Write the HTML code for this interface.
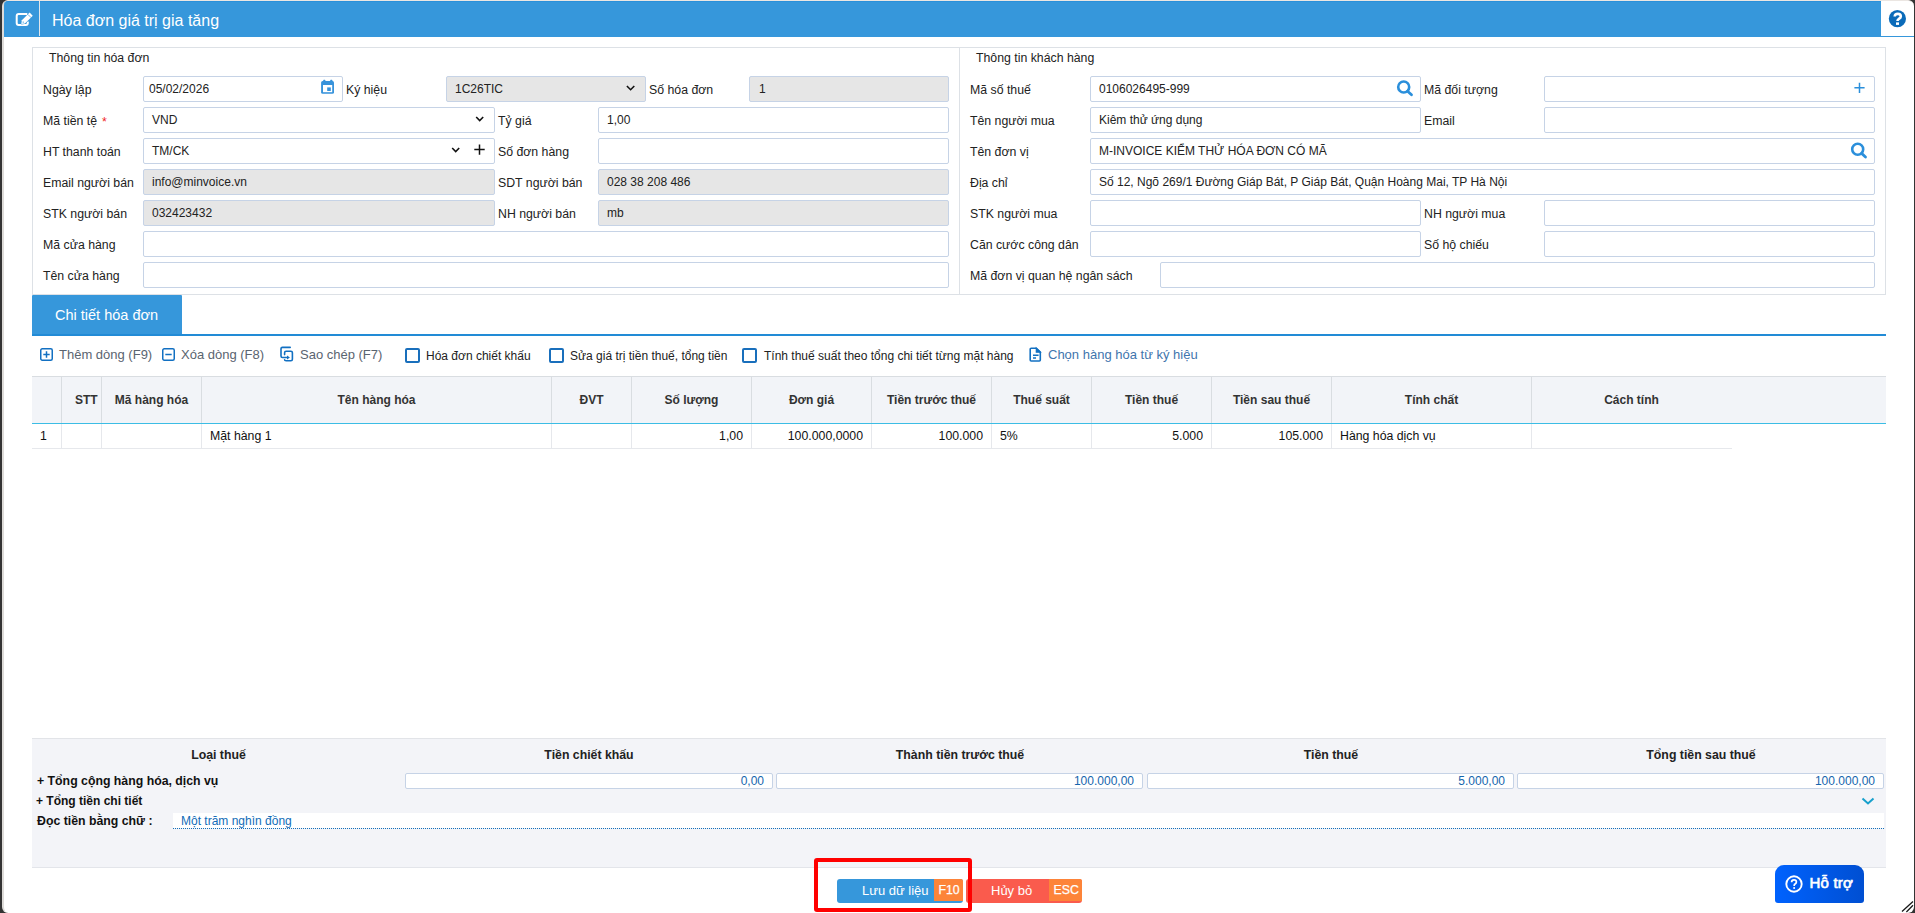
<!DOCTYPE html>
<html><head><meta charset="utf-8">
<style>
*{box-sizing:border-box;margin:0;padding:0}
html,body{width:1915px;height:913px;overflow:hidden;background:#333}
body{font-family:"Liberation Sans",sans-serif;font-size:12px;color:#222;position:relative}
.a{position:absolute}
#win{position:absolute;left:2px;top:0;width:1912px;height:913px;background:#fff;border-radius:6px;border-left:2px solid #dddbd8;border-top:1px solid #ebe6e2;overflow:hidden}
.lb{position:absolute;font-size:12.3px;color:#222;white-space:nowrap;line-height:14px}
.in{position:absolute;height:26px;border:1px solid #c6d3e6;border-radius:2px;background:#fff;font-size:12px;line-height:24px;padding-left:6px;white-space:nowrap;color:#222}
.dis{background:#e6e6e6}
.fs{position:absolute;border:1px solid #dde1e6}
.th{position:absolute;top:377px;height:46px;line-height:46px;text-align:center;font-weight:bold;font-size:12px;color:#333;border-left:1px solid #d9dde1}
.td{position:absolute;top:424px;height:24px;line-height:24px;font-size:12.3px;color:#111;border-left:1px solid #e6e8ec;padding:0 8px;white-space:nowrap}
.sh{position:absolute;top:747px;font-weight:bold;font-size:12.3px;color:#222;text-align:center;line-height:16px}
.sin{position:absolute;top:773px;height:16px;border:1px solid #c6d3e6;border-radius:2px;background:#fff;color:#1565ad;font-size:12px;line-height:14px;text-align:right;padding-right:8px}
.tb{top:347px;font-size:13px;color:#5a6470;line-height:15px;white-space:nowrap}
.tc{top:349px;font-size:12px;color:#222;line-height:15px;white-space:nowrap}
.cb{top:348px;width:15px;height:15px;border:2px solid #196fbc;border-radius:2px;background:#fff}
.sl{font-weight:bold;font-size:12.3px;color:#111;line-height:15px;white-space:nowrap}
.bt{top:882px;font-size:13px;color:#fff;line-height:17px;white-space:nowrap}
</style></head><body>
<div id="win"></div>

<!-- header -->
<div class="a" style="left:4px;top:1px;width:1877px;height:36px;background:#3697db;border-top:1px solid #2a90da;border-radius:4px 0 0 0"></div>
<div class="a" style="left:39px;top:1px;width:1px;height:35px;background:#dfe6ec"></div>
<svg class="a" style="left:12px;top:9px" width="24" height="20" viewBox="0 0 24 20">
 <path d="M15.3 5H6.7a2 2 0 0 0-2 2V13.9a2 2 0 0 0 2 2H13.8a2 2 0 0 0 2-2V12.5" fill="none" stroke="#fff" stroke-width="2"/>
 <path d="M9.3 15L9.84 11.34L17.64 3.54L20.76 6.66L12.96 14.46Z" fill="#fff" stroke="#3697db" stroke-width="1" paint-order="stroke"/>
 <path d="M15.9 5.4L19.1 8.6" stroke="#3697db" stroke-width="0.7"/>
 <circle cx="11.2" cy="13.1" r="0.7" fill="#3697db"/>
</svg>
<div class="a" style="left:52px;top:11px;font-size:16px;color:#fff;line-height:19px;white-space:nowrap">Hóa đơn giá trị gia tăng</div>
<div class="a" style="left:1881px;top:36px;width:33px;height:1px;background:#3697db"></div>
<svg class="a" style="left:1888px;top:10px" width="19" height="19" viewBox="0 0 19 19">
 <circle cx="9.4" cy="8.7" r="8.6" fill="#0b6bb9"/>
 <path d="M6.7 6.5C6.8 4.7 8.1 3.9 9.8 3.9C11.6 3.9 12.8 4.9 12.8 6.4C12.8 7.8 11.8 8.3 10.9 8.8C10 9.3 9.5 9.7 9.5 11" fill="none" stroke="#fff" stroke-width="2.6"/>
 <rect x="8" y="12.4" width="3" height="2.5" fill="#fff"/>
</svg>

<!-- fieldset 1 -->
<div class="fs" style="left:32px;top:47px;width:928px;height:248px;border-right:none"></div>
<div class="fs" style="left:959px;top:47px;width:927px;height:248px"></div>
<div class="lb" style="left:49px;top:51px">Thông tin hóa đơn</div>
<div class="lb" style="left:976px;top:51px">Thông tin khách hàng</div>

<div class="lb" style="left:43px;top:83px">Ngày lập</div>
<div class="in" style="left:143px;top:76px;width:200px;padding-left:5px">05/02/2026</div>
<svg class="a" style="left:320px;top:79px" width="16" height="16"><rect x="1.1" y="2" width="12.9" height="12.8" rx="1.6" fill="#3793db"/><rect x="3" y="6" width="9.2" height="7.2" fill="#fff"/><rect x="3.2" y="0.8" width="2.2" height="2.5" rx="0.6" fill="#3793db"/><rect x="10.2" y="0.8" width="2.2" height="2.5" rx="0.6" fill="#3793db"/><rect x="7.2" y="8.4" width="3.6" height="3.6" fill="#3793db"/></svg>
<div class="lb" style="left:346px;top:83px">Ký hiệu</div>
<div class="in dis" style="left:446px;top:76px;width:200px;padding-left:8px">1C26TIC</div>
<div class="lb" style="left:649px;top:83px">Số hóa đơn</div>
<div class="in dis" style="left:749px;top:76px;width:200px;padding-left:9px">1</div>

<div class="lb" style="left:43px;top:114px">Mã tiền tệ <span style="color:#f02525;position:relative;left:1.5px;top:0.5px">*</span></div>
<div class="in" style="left:143px;top:107px;width:352px;padding-left:8px">VND</div>
<div class="lb" style="left:498px;top:114px">Tỷ giá</div>
<div class="in" style="left:598px;top:107px;width:351px;padding-left:8px">1,00</div>

<div class="lb" style="left:43px;top:145px">HT thanh toán</div>
<div class="in" style="left:143px;top:138px;width:352px;padding-left:8px">TM/CK</div>
<div class="lb" style="left:498px;top:145px">Số đơn hàng</div>
<div class="in" style="left:598px;top:138px;width:351px"></div>

<div class="lb" style="left:43px;top:176px">Email người bán</div>
<div class="in dis" style="left:143px;top:169px;width:352px;padding-left:8px">info@minvoice.vn</div>
<div class="lb" style="left:498px;top:176px">SDT người bán</div>
<div class="in dis" style="left:598px;top:169px;width:351px;padding-left:8px">028 38 208 486</div>

<div class="lb" style="left:43px;top:207px">STK người bán</div>
<div class="in dis" style="left:143px;top:200px;width:352px;padding-left:8px">032423432</div>
<div class="lb" style="left:498px;top:207px">NH người bán</div>
<div class="in dis" style="left:598px;top:200px;width:351px;padding-left:8px">mb</div>

<div class="lb" style="left:43px;top:238px">Mã cửa hàng</div>
<div class="in" style="left:143px;top:231px;width:806px"></div>
<div class="lb" style="left:43px;top:269px">Tên cửa hàng</div>
<div class="in" style="left:143px;top:262px;width:806px"></div>

<!-- fieldset 2 -->
<div class="lb" style="left:970px;top:83px">Mã số thuế</div>
<div class="in" style="left:1090px;top:76px;width:331px;padding-left:8px">0106026495-999</div>
<div class="lb" style="left:1424px;top:83px">Mã đối tượng</div>
<div class="in" style="left:1544px;top:76px;width:331px"></div>

<div class="lb" style="left:970px;top:114px">Tên người mua</div>
<div class="in" style="left:1090px;top:107px;width:331px;padding-left:8px">Kiêm thử ứng dụng</div>
<div class="lb" style="left:1424px;top:114px">Email</div>
<div class="in" style="left:1544px;top:107px;width:331px"></div>

<div class="lb" style="left:970px;top:145px">Tên đơn vị</div>
<div class="in" style="left:1090px;top:138px;width:785px;padding-left:8px">M-INVOICE KIỂM THỬ HÓA ĐƠN CÓ MÃ</div>
<div class="lb" style="left:970px;top:176px">Địa chỉ</div>
<div class="in" style="left:1090px;top:169px;width:785px;padding-left:8px">Số 12, Ngõ 269/1 Đường Giáp Bát, P Giáp Bát, Quận Hoàng Mai, TP Hà Nội</div>

<div class="lb" style="left:970px;top:207px">STK người mua</div>
<div class="in" style="left:1090px;top:200px;width:331px"></div>
<div class="lb" style="left:1424px;top:207px">NH người mua</div>
<div class="in" style="left:1544px;top:200px;width:331px"></div>

<div class="lb" style="left:970px;top:238px">Căn cước công dân</div>
<div class="in" style="left:1090px;top:231px;width:331px"></div>
<div class="lb" style="left:1424px;top:238px">Số hộ chiếu</div>
<div class="in" style="left:1544px;top:231px;width:331px"></div>

<div class="lb" style="left:970px;top:269px">Mã đơn vị quan hệ ngân sách</div>
<div class="in" style="left:1160px;top:262px;width:715px"></div>

<!-- tab -->
<div class="a" style="left:32px;top:295px;width:150px;height:40px;background:#3697db;border-radius:1px 1px 0 0"></div>
<div class="a" style="left:55px;top:307px;font-size:14.5px;color:#fff;line-height:17px;white-space:nowrap">Chi tiết hóa đơn</div>
<div class="a" style="left:32px;top:334px;width:1854px;height:2px;background:#228bd6"></div>


<!-- field icons -->
<svg class="a" style="left:620px;top:80px" width="20" height="14"><path d="M6.9 6L10.6 9.7L14.3 6" fill="none" stroke="#111" stroke-width="1.6"/></svg>
<svg class="a" style="left:470px;top:111px" width="20" height="14"><path d="M6.2 6L9.7 9.5L13.2 6" fill="none" stroke="#111" stroke-width="1.6"/></svg>
<svg class="a" style="left:446px;top:142px" width="20" height="14"><path d="M6.2 6L9.7 9.5L13.2 6" fill="none" stroke="#111" stroke-width="1.6"/></svg>
<svg class="a" style="left:470px;top:140px" width="20" height="20"><path d="M9.5 4.5V14.7M4.3 9.6H14.7" fill="none" stroke="#111" stroke-width="1.5"/></svg>
<svg class="a" style="left:1394px;top:78px" width="22" height="22"><circle cx="9.7" cy="9" r="5.5" fill="none" stroke="#2b8fdb" stroke-width="2.6"/><path d="M13.6 13.2L17.5 16.8" stroke="#2b8fdb" stroke-width="2.8" stroke-linecap="round"/></svg>
<svg class="a" style="left:1848px;top:140px" width="22" height="22"><circle cx="9.7" cy="9.2" r="5.5" fill="none" stroke="#2b8fdb" stroke-width="2.6"/><path d="M13.6 13.4L17.5 17" stroke="#2b8fdb" stroke-width="2.8" stroke-linecap="round"/></svg>
<svg class="a" style="left:1850px;top:78px" width="20" height="20"><path d="M9.5 4.7V14.9M4.4 9.8H14.6" fill="none" stroke="#2b8fdb" stroke-width="1.5"/></svg>

<!-- toolbar -->
<svg class="a" style="left:39px;top:347px" width="15" height="15"><rect x="1.75" y="1.75" width="11.5" height="11.5" rx="1.5" fill="none" stroke="#1270c2" stroke-width="1.5"/><path d="M7.5 4.3V10.7M4.3 7.5H10.7" stroke="#1270c2" stroke-width="1.5"/></svg>
<div class="a tb" style="left:59px">Thêm dòng (F9)</div>
<svg class="a" style="left:161px;top:347px" width="15" height="15"><rect x="1.75" y="1.75" width="11.5" height="11.5" rx="1.5" fill="none" stroke="#1270c2" stroke-width="1.5"/><path d="M4.3 7.5H10.7" stroke="#1270c2" stroke-width="1.5"/></svg>
<div class="a tb" style="left:181px">Xóa dòng (F8)</div>
<svg class="a" style="left:278px;top:345px" width="18" height="19"><path d="M12.2 2.4H4.4Q3 2.4 3 3.8V11.1Q3 12.5 4.4 12.5H9.6" fill="none" stroke="#1270c2" stroke-width="1.6" stroke-linecap="round"/><path d="M9 10.5L11.9 12.5L9 14.5Z" fill="#1270c2"/><path d="M6.6 9.6V7.7Q6.6 6.2 8.1 6.2H12.9Q14.4 6.2 14.4 7.7V14.3Q14.4 15.8 12.9 15.8H8.1Q6.6 15.8 6.6 14.8" fill="none" stroke="#1270c2" stroke-width="1.6" stroke-linecap="round"/></svg>
<div class="a tb" style="left:300px">Sao chép (F7)</div>
<div class="a cb" style="left:405px"></div>
<div class="a tc" style="left:426px">Hóa đơn chiết khấu</div>
<div class="a cb" style="left:549px"></div>
<div class="a tc" style="left:570px">Sửa giá trị tiền thuế, tổng tiền</div>
<div class="a cb" style="left:742px"></div>
<div class="a tc" style="left:764px">Tính thuế suất theo tổng chi tiết từng mặt hàng</div>
<svg class="a" style="left:1028px;top:346px" width="15" height="18"><path d="M3.2 2.2H8.3L12.3 6.2V14a1 1 0 0 1-1 1H3.2a1 1 0 0 1-1-1V3.2a1 1 0 0 1 1-1Z" fill="none" stroke="#1270c2" stroke-width="1.6"/><path d="M8.3 2.2V6.2H12.3Z" fill="#1270c2" stroke="#1270c2" stroke-width="1.2"/><path d="M5 9.3H10.6M5 12H8" stroke="#1270c2" stroke-width="1.5"/></svg>
<div class="a tb" style="left:1048px;color:#3f75ad">Chọn hàng hóa từ ký hiệu</div>

<!-- table -->
<div class="a" style="left:32px;top:376px;width:1854px;height:47px;background:#f2f4f8;border-top:1px solid #d9dde1"></div>
<div class="th" style="left:32px;width:29px;border-left:none"></div>
<div class="th" style="left:61px;width:40px;text-align:left;padding-left:13px">STT</div>
<div class="th" style="left:101px;width:100px">Mã hàng hóa</div>
<div class="th" style="left:201px;width:350px">Tên hàng hóa</div>
<div class="th" style="left:551px;width:80px">ĐVT</div>
<div class="th" style="left:631px;width:120px">Số lượng</div>
<div class="th" style="left:751px;width:120px">Đơn giá</div>
<div class="th" style="left:871px;width:120px">Tiền trước thuế</div>
<div class="th" style="left:991px;width:100px">Thuế suất</div>
<div class="th" style="left:1091px;width:120px">Tiền thuế</div>
<div class="th" style="left:1211px;width:120px">Tiền sau thuế</div>
<div class="th" style="left:1331px;width:200px">Tính chất</div>
<div class="th" style="left:1531px;width:200px">Cách tính</div>
<div class="a" style="left:32px;top:423px;width:1854px;height:1px;background:#3cbde5"></div>
<div class="td" style="left:32px;width:29px;border-left:none;padding-left:8px">1</div>
<div class="td" style="left:61px;width:40px"></div>
<div class="td" style="left:101px;width:100px"></div>
<div class="td" style="left:201px;width:350px">Mặt hàng 1</div>
<div class="td" style="left:551px;width:80px"></div>
<div class="td" style="left:631px;width:120px;text-align:right">1,00</div>
<div class="td" style="left:751px;width:120px;text-align:right">100.000,0000</div>
<div class="td" style="left:871px;width:120px;text-align:right">100.000</div>
<div class="td" style="left:991px;width:100px">5%</div>
<div class="td" style="left:1091px;width:120px;text-align:right">5.000</div>
<div class="td" style="left:1211px;width:120px;text-align:right">105.000</div>
<div class="td" style="left:1331px;width:200px">Hàng hóa dịch vụ</div>
<div class="td" style="left:1531px;width:200px"></div>
<div class="a" style="left:32px;top:448px;width:1700px;height:1px;background:#e6e8ec"></div>

<!-- summary -->
<div class="a" style="left:32px;top:738px;width:1854px;height:130px;background:#f3f4f8;border-top:1px solid #e2e4e8;border-bottom:1px solid #e3e5ea"></div>
<div class="sh" style="left:32px;width:373px">Loại thuế</div>
<div class="sh" style="left:405px;width:368px">Tiền chiết khấu</div>
<div class="sh" style="left:776px;width:368px">Thành tiền trước thuế</div>
<div class="sh" style="left:1147px;width:368px">Tiền thuế</div>
<div class="sh" style="left:1517px;width:368px">Tổng tiền sau thuế</div>
<div class="a sl" style="left:37px;top:774px">+ Tổng cộng hàng hóa, dịch vụ</div>
<div class="sin" style="left:405px;width:368px">0,00</div>
<div class="sin" style="left:776px;width:367px">100.000,00</div>
<div class="sin" style="left:1147px;width:367px">5.000,00</div>
<div class="sin" style="left:1517px;width:367px">100.000,00</div>
<div class="a sl" style="left:36px;top:794px;font-size:12px">+ Tổng tiền chi tiết</div>
<svg class="a" style="left:1860px;top:795px" width="16" height="12"><path d="M2.5 3.5L8 8.5L13.5 3.5" fill="none" stroke="#17a0cc" stroke-width="2"/></svg>
<div class="a sl" style="left:37px;top:814px">Đọc tiền bằng chữ :</div>
<div class="a" style="left:173px;top:813px;width:1711px;height:15px;background:#fff"></div>
<div class="a" style="left:173px;top:828px;width:1711px;height:1px;background:repeating-linear-gradient(90deg,#136fba 0 1px,transparent 1px 2px)"></div>
<div class="a" style="left:181px;top:814px;font-size:12px;line-height:15px;color:#116cb8;white-space:nowrap">Một trăm nghìn đồng</div>

<!-- buttons -->
<div class="a" style="left:837px;top:879px;width:126px;height:24px;background:#3697db;border-radius:3px"></div>
<div class="a" style="left:934px;top:879px;width:29px;height:22px;background:#fd8439;border-radius:0 2px 0 0"></div>
<div class="a bt" style="left:862px">Lưu dữ liệu</div>
<div class="a bt" style="left:938.5px;top:882px;font-size:12.3px;-webkit-text-stroke:0.25px #fff">F10</div>
<div class="a" style="left:966px;top:879px;width:116px;height:24px;background:#fa5b4d;border-radius:3px"></div>
<div class="a" style="left:1049px;top:879px;width:33px;height:22px;background:#fd8439;border-radius:0 2px 0 0"></div>
<div class="a bt" style="left:991px">Hủy bỏ</div>
<div class="a bt" style="left:1053.5px;top:882px;font-size:12.3px;-webkit-text-stroke:0.25px #fff">ESC</div>
<div class="a" style="left:814px;top:858px;width:158px;height:54px;border:4px solid #ff0000;border-radius:3px"></div>

<div class="a" style="left:1775px;top:865px;width:89px;height:38px;border-radius:9px 9px 3px 3px;background:linear-gradient(90deg,#0062fe,#004fd2)"></div>
<svg class="a" style="left:1784px;top:874px" width="20" height="20"><circle cx="10" cy="10" r="7.7" fill="none" stroke="#fff" stroke-width="1.9"/><path d="M7.6 8.3c0-1.5 1-2.4 2.4-2.4s2.4.9 2.4 2.2c0 1.2-.8 1.6-1.4 2-.5.3-.8.6-.8 1.3v.5" fill="none" stroke="#fff" stroke-width="1.7"/><circle cx="10.1" cy="14" r="1" fill="#fff"/></svg>
<div class="a" style="left:1809.5px;top:874px;font-size:15px;color:#fff;line-height:17px;white-space:nowrap;-webkit-text-stroke:0.65px #fff;letter-spacing:0.2px">Hỗ trợ</div>

<!-- resize grip -->
<svg class="a" style="left:1900px;top:899px" width="15" height="14"><path d="M2 12.5L13 2.4M6.4 13L13 6.3" stroke="#1a1a1a" stroke-width="1.3"/></svg>
</body></html>
